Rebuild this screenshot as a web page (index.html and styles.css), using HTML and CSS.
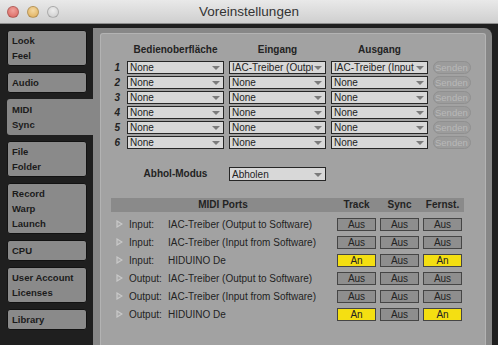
FILE: index.html
```html
<!DOCTYPE html>
<html lang="de">
<head>
  <meta charset="UTF-8" />
  <title>Voreinstellungen</title>
  <link rel="stylesheet" href="styles.css">
</head>
<body>
  <div class="titlebar">
    <div class="lights">
      <span class="light red"></span>
      <span class="light yellow"></span>
      <span class="light off"></span>
    </div>
    <div class="title">Voreinstellungen</div>
  </div>

  <div class="window">
    <!-- Tabs -->
    <nav class="sidebar">
      <div class="tab">Look<br>Feel</div>
      <div class="tab">Audio</div>
      <div class="tab active">MIDI<br>Sync</div>
      <div class="tab">File<br>Folder</div>
      <div class="tab">Record<br>Warp<br>Launch</div>
      <div class="tab">CPU</div>
      <div class="tab">User Account<br>Licenses</div>
      <div class="tab">Library</div>
    </nav>

    <div class="frame">
      <div class="panel">
        <!-- Control surfaces -->
        <div class="surfaces">
          <div></div>
          <div class="colhead">Bedienoberfläche</div>
          <div class="colhead">Eingang</div>
          <div class="colhead">Ausgang</div>
          <div></div>

          <div class="num">1</div>
          <div class="select"><span>None</span><i class="arrow"></i></div>
          <div class="select"><span>IAC-Treiber (Output to Software)</span><i class="arrow"></i></div>
          <div class="select"><span>IAC-Treiber (Input from Software)</span><i class="arrow"></i></div>
          <div class="send">Senden</div>

          <div class="num">2</div>
          <div class="select"><span>None</span><i class="arrow"></i></div>
          <div class="select"><span>None</span><i class="arrow"></i></div>
          <div class="select"><span>None</span><i class="arrow"></i></div>
          <div class="send">Senden</div>

          <div class="num">3</div>
          <div class="select"><span>None</span><i class="arrow"></i></div>
          <div class="select"><span>None</span><i class="arrow"></i></div>
          <div class="select"><span>None</span><i class="arrow"></i></div>
          <div class="send">Senden</div>

          <div class="num">4</div>
          <div class="select"><span>None</span><i class="arrow"></i></div>
          <div class="select"><span>None</span><i class="arrow"></i></div>
          <div class="select"><span>None</span><i class="arrow"></i></div>
          <div class="send">Senden</div>

          <div class="num">5</div>
          <div class="select"><span>None</span><i class="arrow"></i></div>
          <div class="select"><span>None</span><i class="arrow"></i></div>
          <div class="select"><span>None</span><i class="arrow"></i></div>
          <div class="send">Senden</div>

          <div class="num">6</div>
          <div class="select"><span>None</span><i class="arrow"></i></div>
          <div class="select"><span>None</span><i class="arrow"></i></div>
          <div class="select"><span>None</span><i class="arrow"></i></div>
          <div class="send">Senden</div>
        </div>

        <div class="surfaces takeover">
          <div></div>
          <div class="colhead">Abhol-Modus</div>
          <div class="select tall"><span>Abholen</span><i class="arrow"></i></div>
        </div>

        <!-- MIDI ports -->
        <div class="ports">
          <div class="phead">
            <div>MIDI Ports</div>
            <div>Track</div>
            <div>Sync</div>
            <div>Fernst.</div>
          </div>
          <div class="prows">
            <div class="prow">
              <svg class="tri" width="7" height="8" viewBox="0 0 7 8"><polygon points="1,1 6,4 1,7" /></svg>
              <div>Input:</div><div>IAC-Treiber (Output to Software)</div>
              <div class="tg">Aus</div><div class="tg">Aus</div><div class="tg">Aus</div>
            </div>
            <div class="prow">
              <svg class="tri" width="7" height="8" viewBox="0 0 7 8"><polygon points="1,1 6,4 1,7" /></svg>
              <div>Input:</div><div>IAC-Treiber (Input from Software)</div>
              <div class="tg">Aus</div><div class="tg">Aus</div><div class="tg">Aus</div>
            </div>
            <div class="prow">
              <svg class="tri" width="7" height="8" viewBox="0 0 7 8"><polygon points="1,1 6,4 1,7" /></svg>
              <div>Input:</div><div>HIDUINO De</div>
              <div class="tg on">An</div><div class="tg">Aus</div><div class="tg on">An</div>
            </div>
            <div class="prow">
              <svg class="tri" width="7" height="8" viewBox="0 0 7 8"><polygon points="1,1 6,4 1,7" /></svg>
              <div>Output:</div><div>IAC-Treiber (Output to Software)</div>
              <div class="tg">Aus</div><div class="tg">Aus</div><div class="tg">Aus</div>
            </div>
            <div class="prow">
              <svg class="tri" width="7" height="8" viewBox="0 0 7 8"><polygon points="1,1 6,4 1,7" /></svg>
              <div>Output:</div><div>IAC-Treiber (Input from Software)</div>
              <div class="tg">Aus</div><div class="tg">Aus</div><div class="tg">Aus</div>
            </div>
            <div class="prow">
              <svg class="tri" width="7" height="8" viewBox="0 0 7 8"><polygon points="1,1 6,4 1,7" /></svg>
              <div>Output:</div><div>HIDUINO De</div>
              <div class="tg on">An</div><div class="tg">Aus</div><div class="tg on">An</div>
            </div>
          </div>
        </div>
      </div>
    </div>
  </div>
</body>
</html>
```

FILE: styles.css
```css
:root {
  --dark: #1f1f1f;
  --tab: #8a8a8a;
  --frame: #878787;
  --panel: #a2a2a2;
  --field: #d8d8d8;
  --ink: #232323;
  --yellow: #f4df12;
}

* {
  box-sizing: border-box;
}

body {
  margin: 0;
  width: 498px;
  height: 345px;
  overflow: hidden;
  background: var(--dark);
  font-family: "Liberation Sans", Arial, sans-serif;
  color: var(--ink);
}

/* Title bar */
.titlebar {
  height: 24px;
  display: flex;
  align-items: center;
  background: linear-gradient(#e9e9e9, #cfcfcf);
  border-bottom: 1px solid #8d8d8d;
}
.lights {
  display: flex;
  gap: 8px;
  padding-left: 7px;
  width: 59px;
}
.light {
  width: 12px;
  height: 12px;
  border-radius: 50%;
  border: 1px solid rgba(0, 0, 0, 0.2);
}
.light.red { background: radial-gradient(circle at 50% 35%, #f0a29c, #d9625c); }
.light.yellow { background: radial-gradient(circle at 50% 35%, #f4d9a2, #ddab55); }
.light.off { background: radial-gradient(circle at 50% 35%, #eeeeee, #c9c9c9); }
.title {
  flex: 1;
  text-align: center;
  padding-right: 59px;
  font-size: 13.5px;
  color: #333;
}

/* Layout */
.window {
  display: flex;
  height: 321px;
}

.sidebar {
  width: 93px;
  padding: 6px 0 0 7px;
  display: flex;
  flex-direction: column;
  gap: 6px;
}
.tab {
  width: 80px;
  padding: 2px 4px;
  border: 1px solid #121212;
  border-radius: 3px;
  background: var(--tab);
  font-size: 9.5px;
  font-weight: bold;
  line-height: 15px;
  color: #1b1b1b;
}
.tab.active {
  width: 86px;
  border: none;
  border-radius: 3px 0 0 3px;
  padding: 3px 5px;
  background: var(--frame);
}

.frame {
  flex: 1;
  margin: 4px 6px 0 0;
  padding: 5px 6px 0 7px;
  background: var(--frame);
  border-radius: 0 8px 0 0;
  display: flex;
}
.panel {
  flex: 1;
  background: var(--panel);
  border: 1px solid #b3b3b3;
  border-bottom: none;
  border-radius: 3px 3px 0 0;
  padding-top: 10px;
}

/* Control surface grid */
.surfaces {
  display: grid;
  grid-template-columns: 15px 97px 97px 97px 38px;
  grid-template-rows: 15px;
  grid-auto-rows: 13px;
  column-gap: 5px;
  row-gap: 2px;
  padding-left: 6px;
}
.colhead {
  text-align: center;
  font-size: 10px;
  font-weight: bold;
  line-height: 12px;
  white-space: nowrap;
}
.num {
  text-align: right;
  padding-right: 2px;
  font-size: 10px;
  font-weight: bold;
  font-style: italic;
  line-height: 13px;
}
.select {
  display: flex;
  align-items: center;
  height: 13px;
  border: 1px solid #262626;
  background: var(--field);
  padding-left: 2px;
  font-size: 10px;
  line-height: 11px;
  overflow: hidden;
}
.select span {
  flex: 1;
  white-space: nowrap;
  overflow: hidden;
}
.arrow {
  width: 0;
  height: 0;
  margin: 1px 3px 0 1px;
  border-left: 4px solid transparent;
  border-right: 4px solid transparent;
  border-top: 4px solid #7b7b7b;
}
.send {
  height: 13px;
  border: 1px solid #909090;
  border-radius: 7px;
  background: #9c9c9c;
  color: #b9b9b9;
  font-size: 9.5px;
  line-height: 11px;
  padding-left: 1px;
  white-space: nowrap;
  overflow: hidden;
}

.takeover {
  margin-top: 18px;
  grid-template-rows: 14px;
  align-items: center;
}
.select.tall {
  height: 14px;
}

/* MIDI ports table */
.ports {
  margin: 17px 0 0 10px;
  width: 353px;
}
.phead {
  display: grid;
  grid-template-columns: 224px 43px 43px 43px;
  height: 14px;
  background: #8a8a8a;
  font-size: 10px;
  font-weight: bold;
  line-height: 14px;
  text-align: center;
}
.prows {
  margin-top: 3px;
}
.prow {
  display: grid;
  grid-template-columns: 16px 39px 169px 43px 43px 43px;
  height: 18px;
  align-items: center;
  font-size: 10px;
  white-space: nowrap;
}
.tri {
  justify-self: center;
  fill: #a9a9a9;
  stroke: #c9c9c9;
  stroke-width: 1.2;
}
.prow > div:nth-child(2) {
  padding-left: 2px;
}
.prow > div:nth-child(3) {
  padding-left: 2px;
}
.tg {
  justify-self: center;
  width: 39px;
  height: 13px;
  border: 1px solid #454545;
  background: #8e8e8e;
  text-align: center;
  line-height: 11px;
}
.tg.on {
  background: var(--yellow);
}
```
